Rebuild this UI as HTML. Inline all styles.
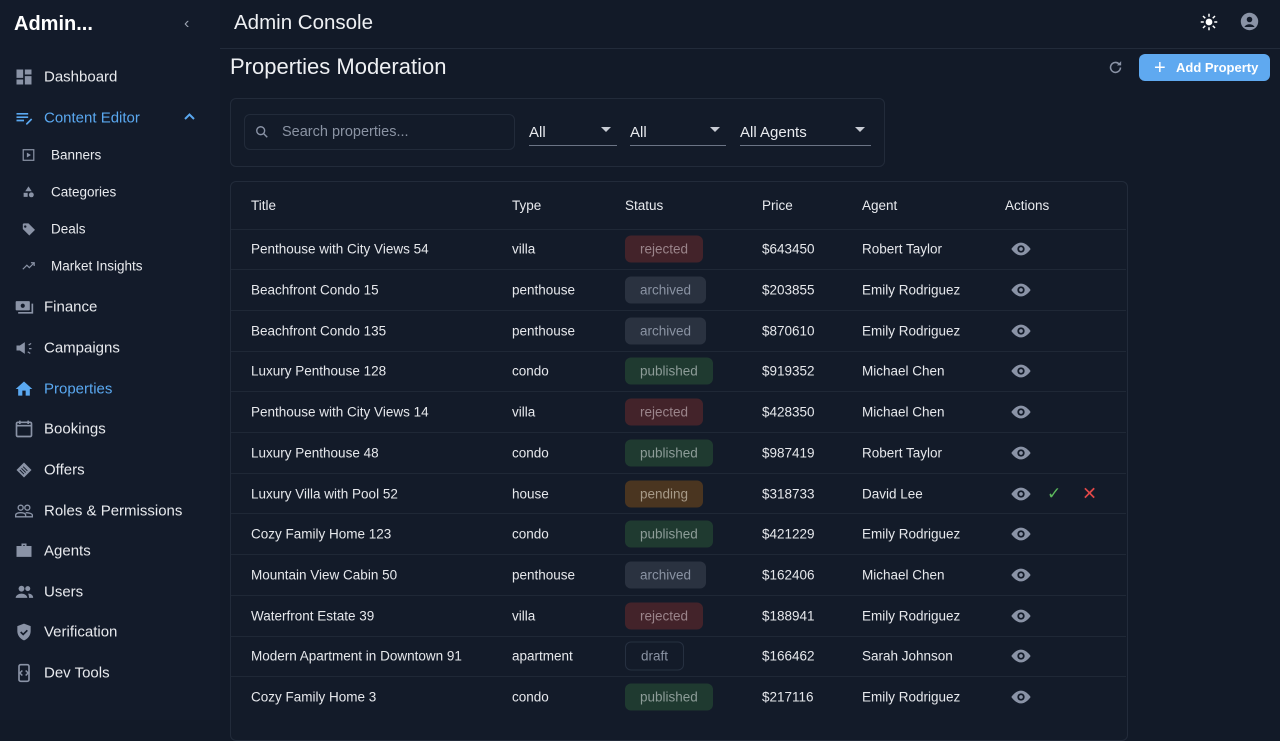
<!DOCTYPE html>
<html><head><meta charset="utf-8"><style>
*{margin:0;padding:0;box-sizing:border-box}
body{width:1280px;height:720px;overflow:hidden;background:#121a28;font-family:"Liberation Sans",sans-serif;color:#e6e8ec;position:relative}
.a{position:absolute;white-space:nowrap}
.side{position:absolute;left:0;top:0;width:220px;height:720px;background:#131b2a}
.nav{position:absolute;left:44px;font-size:15px;color:#e8eaee;transform:translateY(-50%)}
.sub{position:absolute;left:51px;font-size:13.5px;color:#e8eaee;transform:translateY(-50%)}
.ic{position:absolute;left:14px;width:20px;height:20px;transform:translateY(-50%)}
.sic{position:absolute;left:22px;width:13px;height:13px;transform:translateY(-50%)}
.blue{color:#5aa8f0}
.card{position:absolute;border:1px solid #222b3a;border-radius:6px;background:#131b29}
.row{position:absolute;left:231px;width:895px;height:40.7px;border-top:1px solid #1f2836;font-size:13.5px}
.row span{position:absolute;top:50%;transform:translateY(-50%);white-space:nowrap}
.row svg{display:block}
.b{padding:6px 15px;border-radius:6px;font-size:13.5px;color:#8a93a3}
.rej{background:#43232a;color:#9b858b}
.arc{background:#2a3240}
.pub{background:#1f3a30;color:#8d9c98}
.pen{background:#4a3520;color:#a79a88}
.dra{border:1px solid #263040;color:#8a93a3}
.th{font-size:13.5px;color:#e8eaee}
.sel{position:absolute;top:119px;height:27px;border-bottom:1px solid #6b7485;font-size:15px;color:#e8eaee}
.sel i{position:absolute;right:6px;top:8px;border:5px solid transparent;border-top-color:#c8ccd4}
</style></head><body>
<div class="side">
<div class="a" style="left:14px;top:13px;font-size:20px;font-weight:bold;color:#fff">Admin...</div>
<div class="a" style="left:184px;top:15px;font-size:16px;color:#9aa2b0">&#8249;</div>

<svg class="ic" style="top:77px" viewBox="0 0 24 24" fill="#8a93a6"><path d="M3 13h8V3H3zm0 8h8v-6H3zm10 0h8V11h-8zm0-18v6h8V3z"/></svg>
<div class="nav" style="top:77px">Dashboard</div>
<svg class="ic" style="top:118px" viewBox="0 0 24 24" fill="#5aa8f0"><path d="M3 6h14v2H3zm0 4h14v2H3zm0 4h9v2H3zm17.5-1.5l1.4 1.4-6 6H14.5v-1.4z"/></svg>
<div class="nav blue" style="top:118px">Content Editor</div>
<svg class="a" style="left:183px;top:112px" width="13" height="10" viewBox="0 0 13 10"><path d="M2 7l4.5-4.5L11 7" stroke="#5aa8f0" stroke-width="2" fill="none"/></svg>
<svg class="sic" style="top:155px" viewBox="0 0 16 16"><rect x="1.5" y="1.5" width="13" height="13" fill="none" stroke="#8a93a6" stroke-width="1.5"/><path d="M6 5v6l5-3z" fill="#8a93a6"/></svg>
<div class="sub" style="top:155px">Banners</div>
<svg class="sic" style="top:192px" viewBox="0 0 16 16" fill="#8a93a6"><path d="M8 1l4 6H4z"/><rect x="2" y="9" width="5" height="5"/><circle cx="11.5" cy="11.5" r="3"/></svg>
<div class="sub" style="top:192px">Categories</div>
<svg class="sic" style="top:229px" viewBox="0 0 16 16" fill="#8a93a6"><path d="M1 2v6l8 8 7-7-8-8H2zm3 1.5a1.5 1.5 0 110 3 1.5 1.5 0 010-3z"/></svg>
<div class="sub" style="top:229px">Deals</div>
<svg class="sic" style="top:266px" viewBox="0 0 16 16"><path d="M1 12l5-5 3 3 6-6M11 4h4v4" stroke="#8a93a6" stroke-width="1.5" fill="none"/></svg>
<div class="sub" style="top:266px">Market Insights</div>

<svg class="ic" style="top:307px" viewBox="0 0 24 24" fill="#8a93a6"><rect x="2" y="5" width="17" height="11" rx="1"/><path d="M21 8v10H5v2h18V8z"/><circle cx="10.5" cy="10.5" r="2.5" fill="#131b2a"/></svg>
<div class="nav" style="top:307px">Finance</div>
<svg class="ic" style="top:348px" viewBox="0 0 24 24" fill="#8a93a6"><path d="M3 9h4l6-4v14l-6-4H3zm14-1l3-2 1 1-3 2zm1 4h3v1.5h-3zm-1 4l3 2-1 1-3-2z"/></svg>
<div class="nav" style="top:348px">Campaigns</div>
<svg class="ic" style="top:389px" viewBox="0 0 24 24" fill="#5aa8f0"><path d="M10 20v-6h4v6h5v-8h3L12 3 2 12h3v8z"/></svg>
<div class="nav blue" style="top:389px">Properties</div>
<svg class="ic" style="top:429px" viewBox="0 0 24 24"><rect x="3" y="4" width="18" height="17" rx="1.5" fill="none" stroke="#8a93a6" stroke-width="2"/><path d="M3 8h18M7 2v4M17 2v4" stroke="#8a93a6" stroke-width="2"/></svg>
<div class="nav" style="top:429px">Bookings</div>
<svg class="ic" style="top:470px" viewBox="0 0 24 24" fill="#8a93a6"><path d="M12 3l9 9-9 9-9-9z"/><path d="M7 12l5 5M9 10l5 5M11 8l5 5" stroke="#131b2a" stroke-width="1.2"/></svg>
<div class="nav" style="top:470px">Offers</div>
<svg class="ic" style="top:511px" viewBox="0 0 24 24"><circle cx="8" cy="8" r="3" fill="none" stroke="#8a93a6" stroke-width="1.6"/><circle cx="16" cy="8" r="3" fill="none" stroke="#8a93a6" stroke-width="1.6"/><path d="M2 19v-2c0-2 3-3 6-3s6 1 6 3v2zM14 14c3 0 8 1 8 3v2h-8" fill="none" stroke="#8a93a6" stroke-width="1.6"/></svg>
<div class="nav" style="top:511px">Roles &amp; Permissions</div>
<svg class="ic" style="top:551px" viewBox="0 0 24 24" fill="#8a93a6"><path d="M9 3h6v3h6v13H3V6h6zm2 2v1h2V5zM3 12h18v1.5H3z"/></svg>
<div class="nav" style="top:551px">Agents</div>
<svg class="ic" style="top:592px" viewBox="0 0 24 24" fill="#8a93a6"><circle cx="9" cy="8" r="3.5"/><circle cx="16.5" cy="8" r="3"/><path d="M2 19c0-3 4-5 7-5s7 2 7 5zM17 14c3 0 6 1.5 6 5h-5c0-2-.5-3.5-1-5z"/></svg>
<div class="nav" style="top:592px">Users</div>
<svg class="ic" style="top:632px" viewBox="0 0 24 24" fill="#8a93a6"><path d="M12 2l8 3v6c0 5-3.5 9.5-8 11-4.5-1.5-8-6-8-11V5z"/><path d="M8 12l3 3 5-5" stroke="#131b2a" stroke-width="2" fill="none"/></svg>
<div class="nav" style="top:632px">Verification</div>
<svg class="ic" style="top:673px" viewBox="0 0 24 24"><rect x="6" y="2" width="12" height="20" rx="2" fill="none" stroke="#8a93a6" stroke-width="2"/><path d="M10 9l-3 3 3 3M14 9l3 3-3 3" stroke="#8a93a6" stroke-width="1.8" fill="none"/></svg>
<div class="nav" style="top:673px">Dev Tools</div>
</div>

<div class="a" style="left:220px;top:48px;width:1060px;height:1px;background:#222b3a"></div>
<div class="a" style="left:234px;top:11px;font-size:20.5px;color:#eef0f3">Admin Console</div>
<svg class="a" style="left:1200px;top:13px" width="18" height="18" viewBox="0 0 24 24" fill="#fff"><circle cx="12" cy="12" r="4.5"/><path d="M12 1v4M12 19v4M1 12h4M19 12h4M4 4l3 3M17 17l3 3M4 20l3-3M17 7l3-3" stroke="#fff" stroke-width="2"/></svg>
<svg class="a" style="left:1240px;top:12px" width="19" height="19" viewBox="0 0 24 24"><circle cx="12" cy="12" r="11" fill="#8a93a6"/><circle cx="12" cy="9.5" r="3.5" fill="#121a28"/><path d="M5.5 19c1.5-2.5 4-3.5 6.5-3.5s5 1 6.5 3.5" fill="#121a28"/></svg>

<div class="a" style="left:230px;top:54px;font-size:22px;color:#eef0f3">Properties Moderation</div>
<svg class="a" style="left:1107px;top:59px" width="17" height="17" viewBox="0 0 24 24"><path d="M19 12a7 7 0 11-2-5" stroke="#8a93a6" stroke-width="2.2" fill="none"/><path d="M20 3v6h-6z" fill="#8a93a6"/></svg>
<div class="a" style="left:1139px;top:54px;width:131px;height:27px;background:#5fa9f0;border-radius:6px;color:#fff;font-size:13px;font-weight:bold;line-height:27px;padding-left:37px">Add Property</div>
<div class="a" style="left:1154px;top:57px;font-size:20px;color:#fff">+</div>

<div class="card" style="left:230px;top:98px;width:655px;height:69px"></div>
<div class="a" style="left:244px;top:114px;width:271px;height:36px;border:1px solid #222b3a;border-radius:6px"></div>
<svg class="a" style="left:255px;top:125px" width="14" height="14" viewBox="0 0 16 16"><circle cx="6.5" cy="6.5" r="4.5" stroke="#8a93a6" stroke-width="1.6" fill="none"/><path d="M10 10l4 4" stroke="#8a93a6" stroke-width="1.6"/></svg>
<div class="a" style="left:282px;top:124px;font-size:14.5px;color:#8a93a3">Search properties...</div>
<div class="sel" style="left:529px;width:88px"><span style="position:absolute;top:5px">All</span><i></i></div>
<div class="sel" style="left:630px;width:96px"><span style="position:absolute;top:5px">All</span><i></i></div>
<div class="sel" style="left:740px;width:131px"><span style="position:absolute;top:5px">All Agents</span><i></i></div>

<div class="card" style="left:230px;top:181px;width:898px;height:560px"></div>
<div class="a th" style="left:251px;top:198px">Title</div>
<div class="a th" style="left:512px;top:198px">Type</div>
<div class="a th" style="left:625px;top:198px">Status</div>
<div class="a th" style="left:762px;top:198px">Price</div>
<div class="a th" style="left:862px;top:198px">Agent</div>
<div class="a th" style="left:1005px;top:198px">Actions</div>

<div id="rows"></div>
<script>
var d=[["Penthouse with City Views 54","villa","rejected","rej","$643450","Robert Taylor"],
["Beachfront Condo 15","penthouse","archived","arc","$203855","Emily Rodriguez"],
["Beachfront Condo 135","penthouse","archived","arc","$870610","Emily Rodriguez"],
["Luxury Penthouse 128","condo","published","pub","$919352","Michael Chen"],
["Penthouse with City Views 14","villa","rejected","rej","$428350","Michael Chen"],
["Luxury Penthouse 48","condo","published","pub","$987419","Robert Taylor"],
["Luxury Villa with Pool 52","house","pending","pen","$318733","David Lee"],
["Cozy Family Home 123","condo","published","pub","$421229","Emily Rodriguez"],
["Mountain View Cabin 50","penthouse","archived","arc","$162406","Michael Chen"],
["Waterfront Estate 39","villa","rejected","rej","$188941","Emily Rodriguez"],
["Modern Apartment in Downtown 91","apartment","draft","dra","$166462","Sarah Johnson"],
["Cozy Family Home 3","condo","published","pub","$217116","Emily Rodriguez"]];
var eye='<svg width="22" height="22" viewBox="0 0 24 24"><path d="M12 5C6 5 1.5 12 1.5 12S6 19 12 19s10.5-7 10.5-7S18 5 12 5z" fill="#8a93a6"/><circle cx="12" cy="12" r="4" fill="#131b29"/><circle cx="12" cy="12" r="2" fill="#8a93a6"/></svg>';
var h='';d.forEach(function(r,i){var t=228.5+i*40.7;
h+='<div class="row" style="top:'+t+'px"><span style="left:20px">'+r[0]+'</span><span style="left:281px">'+r[1]+'</span><span class="b '+r[3]+'" style="left:394px">'+r[2]+'</span><span style="left:531px">'+r[4]+'</span><span style="left:631px">'+r[5]+'</span><span style="left:779px;width:22px;height:22px">'+eye+'</span>'+
(r[2]=="pending"?'<span style="left:816px;color:#5cb85c;font-size:17px">&#10003;</span><span style="left:851px;color:#e04848;font-size:18px">&#10005;</span>':'')+'</div>';});
document.getElementById('rows').innerHTML=h;
</script>
</body></html>
